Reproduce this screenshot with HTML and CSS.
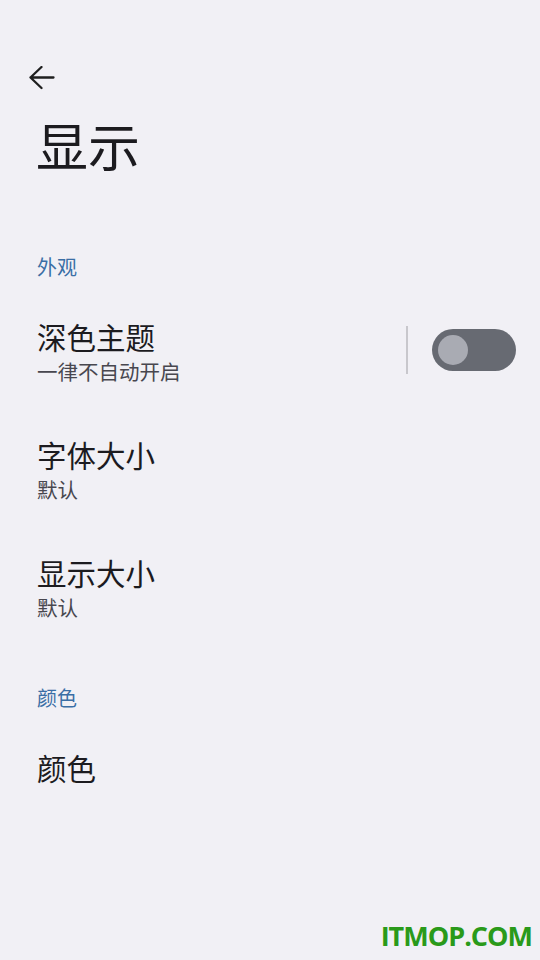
FILE: index.html
```html
<!DOCTYPE html>
<html lang="zh-CN">
<head>
  <meta charset="UTF-8">
  <meta name="viewport" content="width=device-width, initial-scale=1.0">
  <title>显示</title>
  <link rel="stylesheet" href="styles.css">
</head>
<body>
  <div class="top-bar">
    <button class="back-btn" aria-label="返回">
      <svg width="26" height="24" viewBox="0 0 26 24">
        <path d="M24.5 11.5H1.5M12.5 1L1.5 11.5L12.5 22" fill="none" stroke="#1f1f1f" stroke-width="2.3" stroke-linecap="round" stroke-linejoin="round"/>
      </svg>
    </button>
  </div>

  <h1 class="page-title">显示</h1>

  <div class="section-title">外观</div>

  <div class="pref-row">
    <div class="pref-text">
      <div class="pref-name">深色主题</div>
      <div class="pref-sub">一律不自动开启</div>
    </div>
    <div class="pref-divider"></div>
    <div class="switch"><div class="switch-thumb"></div></div>
  </div>

  <div class="pref-row">
    <div class="pref-text">
      <div class="pref-name">字体大小</div>
      <div class="pref-sub">默认</div>
    </div>
  </div>

  <div class="pref-row">
    <div class="pref-text">
      <div class="pref-name">显示大小</div>
      <div class="pref-sub">默认</div>
    </div>
  </div>

  <div class="section-title second">颜色</div>

  <div class="pref-row single">
    <div class="pref-text">
      <div class="pref-name">颜色</div>
    </div>
  </div>

  <div class="watermark">ITMOP.COM</div>
</body>
</html>
```

FILE: styles.css
```css
html, body {
  height: 100%;
}
body {
  margin: 0;
  background: #f1f0f5;
  font-family: "Noto Sans CJK SC", "Noto Sans", sans-serif;
  color: #1c1b1f;
  position: relative;
  overflow: hidden;
}
.top-bar {
  height: 107px;
  padding: 66px 0 0 29px;
  box-sizing: border-box;
}
.back-btn {
  border: none;
  background: none;
  padding: 0;
  display: block;
  line-height: 0;
}
.page-title {
  margin: 0;
  padding: 0 0 0 36px;
  font-size: 52px;
  font-weight: 400;
  line-height: 76px;
}
.section-title {
  padding: 0 37px;
  margin: 70px 0 10px;
  font-size: 20px;
  line-height: 28px;
  color: #3a6ea5;
}
.section-title.second {
  margin-top: 39px;
}
.pref-row {
  display: flex;
  align-items: center;
  padding: 0 24px 0 37px;
  height: 118px;
}
.pref-row.single {
  height: 90px;
}
.pref-text {
  flex: 1;
}
.pref-name {
  font-size: 29.5px;
  line-height: 41px;
}
.pref-sub {
  font-size: 20.5px;
  line-height: 28px;
  color: #48474f;
}
.pref-divider {
  width: 2px;
  height: 48px;
  background: #c8c7cc;
  margin-right: 24px;
}
.switch {
  width: 84px;
  height: 42px;
  border-radius: 21px;
  background: #676a72;
  display: flex;
  align-items: center;
  padding-left: 6px;
  box-sizing: border-box;
}
.switch-thumb {
  width: 30px;
  height: 30px;
  border-radius: 50%;
  background: #a9abb3;
}
.watermark {
  position: absolute;
  right: 8px;
  bottom: 6px;
  font-family: "Open Sans", "Liberation Sans", sans-serif;
  font-weight: 700;
  font-size: 27px;
  color: #2a9a1a;
  letter-spacing: -1px;
}
```
